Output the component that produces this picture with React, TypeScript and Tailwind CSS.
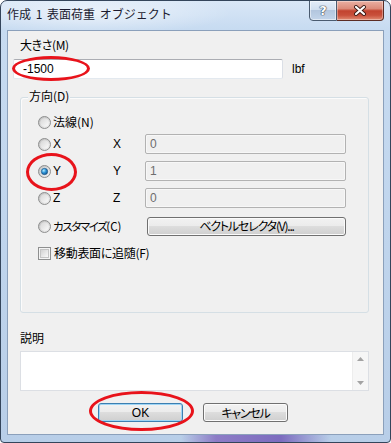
import React from "react";

const jp = "font-['Noto_Sans_CJK_JP',sans-serif] [font-feature-settings:'palt']";
const lat = "font-['Liberation_Sans','Noto_Sans_CJK_JP',sans-serif]";

function Radio({ checked }: { checked?: boolean }) {
  return (
    <svg width="13" height="13" viewBox="0 0 13 13" className="shrink-0">
      <defs>
        <linearGradient id="rgOuter" x1="0" y1="0" x2="1" y2="1">
          <stop offset="0" stopColor="#b9b9b9" />
          <stop offset="1" stopColor="#f4f4f4" />
        </linearGradient>
        <linearGradient id="rgInner" x1="0" y1="0" x2="1" y2="1">
          <stop offset="0" stopColor="#d6d6d6" />
          <stop offset="1" stopColor="#fbfbfb" />
        </linearGradient>
        <radialGradient id="rgDot" cx="0.38" cy="0.35" r="0.75">
          <stop offset="0" stopColor="#b5ecff" />
          <stop offset="0.45" stopColor="#2f95d8" />
          <stop offset="1" stopColor="#0b4a85" />
        </radialGradient>
      </defs>
      <circle cx="6.5" cy="6.5" r="6" fill="url(#rgOuter)" stroke="#8e8f8f" strokeWidth="1" />
      <circle cx="6.5" cy="6.5" r="4.3" fill="url(#rgInner)" />
      {checked && <circle cx="6.5" cy="6.5" r="3.2" fill="url(#rgDot)" stroke="#1d4f7c" strokeWidth="0.6" />}
    </svg>
  );
}

function Check() {
  return (
    <div className="w-[13px] h-[13px] shrink-0 border border-[#8e8f8f] bg-[#f4f4f4] p-[1px]">
      <div className="w-full h-full border border-[#c4c4c4] bg-[linear-gradient(135deg,#d2d2d2,#f9f9f9)]" />
    </div>
  );
}

function DisabledInput({ value }: { value: string }) {
  return (
    <div className={`w-[201px] h-[20px] rounded-[2px] border border-[#b2b2b2] bg-[#f0f0f0] shadow-[inset_0_0_0_1px_#f7f7f7] pl-[4px] flex items-center text-[12px] leading-[16px] text-[#6d6d6d] ${lat}`}>
      {value}
    </div>
  );
}

const btn =
  "h-[19px] rounded-[3px] border flex items-center justify-center bg-[linear-gradient(to_bottom,#f2f2f2_0%,#ebebeb_50%,#dddddd_50%,#cfcfcf_100%)] text-[12px] leading-[16px] text-black";

export default function App() {
  return (
    <div className="relative w-[391px] h-[443px] bg-white overflow-hidden">
      <div className="flex flex-col w-[391px] h-[443px] rounded-t-[7px] rounded-b-[4px] border border-[#34455b] bg-[linear-gradient(to_bottom,#d9e7f7_0px,#c7dbf1_28px,#b8cee8_100%)] overflow-hidden">
        {/* title bar */}
        <div className="flex h-[29px] shrink-0 bg-[radial-gradient(ellipse_140px_22px_at_90px_12px,rgba(255,255,255,0.55),rgba(255,255,255,0))]">
          <div className="pl-[6px] pt-[5px] text-[12px] leading-[16px] text-[#1b1b30] font-['Noto_Sans_CJK_JP',sans-serif] [word-spacing:2px]">
            作成 1 表面荷重 オブジェクト
          </div>
          <div className="ml-auto mr-[6px] -mt-[1px] flex h-[21px]">
            <div className="w-[28px] h-full border border-[#4a5b70] rounded-bl-[4px] bg-[linear-gradient(to_bottom,#e4edf8_0%,#d2e0f0_45%,#b3c6de_50%,#c3d5ea_100%)] shadow-[inset_0_0_0_1px_rgba(255,255,255,0.5)] flex items-center justify-center">
              <span className="font-['DejaVu_Sans',sans-serif] font-bold text-[13px] leading-[14px] text-white [text-shadow:0_0_1px_#2f3b4b,0_0_1px_#2f3b4b,0_0_1px_#2f3b4b]">?</span>
            </div>
            <div className="w-[47px] h-full border border-l-0 border-[#5b2c24] rounded-br-[4px] bg-[linear-gradient(to_bottom,#eab0a3_0%,#dc8b7a_40%,#c2432f_52%,#c9503b_75%,#e18c73_100%)] shadow-[inset_0_0_0_1px_rgba(255,255,255,0.35)] flex items-center justify-center">
              <svg width="14" height="11" viewBox="0 0 14 11">
                <path d="M3 2 L11 9 M11 2 L3 9" stroke="#3d1b16" strokeWidth="4" strokeLinecap="round" />
                <path d="M3 2 L11 9 M11 2 L3 9" stroke="#ffffff" strokeWidth="2.2" strokeLinecap="round" />
              </svg>
            </div>
          </div>
        </div>

        {/* client area */}
        <div className={`mx-[6px] flex-1 border border-[#8ba0bb] bg-[#f0f0f0] flex flex-col pt-[6px] ${jp}`}>
          <div className="pl-[12px] text-[12px] leading-[16px] text-black tracking-[-0.4px]">大きさ(M)</div>
          <div className="mt-[6px] flex items-center">
            <div className={`ml-[5px] w-[270px] h-[20px] rounded-[2px] border border-[#abadb3] border-l-[#e2e3ea] border-r-[#dbdfe6] border-b-[#e3e9ef] bg-white pl-[9px] flex items-center text-[12px] leading-[16px] text-black ${lat}`}>
              -1500
            </div>
            <span className={`ml-[9px] text-[12px] leading-[16px] text-black ${lat}`}>lbf</span>
          </div>

          {/* group box */}
          <div className="relative mt-[18px] ml-[12px] w-[349px] h-[216px] rounded-[3px] border border-[#d5dfe5] shadow-[inset_1px_1px_0_#fbfbfb] pt-[14px] flex flex-col text-[12px] leading-[16px] text-black">
            <span className="absolute left-[7px] -top-[10px] px-[1px] bg-[#f0f0f0]">方向(D)</span>

            <div className="h-[20px] flex items-center pl-[17px]">
              <div className="w-[75px] flex items-center gap-[2px]">
                <Radio />
                <span>法線(N)</span>
              </div>
            </div>

            <div className="mt-[2px] h-[20px] flex items-center pl-[17px]">
              <div className="w-[75px] flex items-center gap-[2px]">
                <Radio />
                <span className={lat}>X</span>
              </div>
              <span className={`w-[32px] ${lat}`}>X</span>
              <DisabledInput value="0" />
            </div>

            <div className="mt-[7px] h-[20px] flex items-center pl-[17px]">
              <div className="w-[75px] flex items-center gap-[2px]">
                <Radio checked />
                <span className={lat}>Y</span>
              </div>
              <span className={`w-[32px] ${lat}`}>Y</span>
              <DisabledInput value="1" />
            </div>

            <div className="mt-[7px] h-[20px] flex items-center pl-[17px]">
              <div className="w-[75px] flex items-center gap-[2px]">
                <Radio />
                <span className={lat}>Z</span>
              </div>
              <span className={`w-[32px] ${lat}`}>Z</span>
              <DisabledInput value="0" />
            </div>

            <div className="mt-[9px] h-[18px] flex items-center pl-[17px]">
              <div className="w-[109px] flex items-center gap-[2px]">
                <Radio />
                <span className="text-[11.5px]">
                  <span className="tracking-[-1.4px]">カスタマイズ</span>
                  <span>(C)</span>
                </span>
              </div>
              <div className={`${btn} h-[18px] w-[199px] border-[#707070] shadow-[inset_0_0_0_1px_#fbfbfb] text-[11px] tracking-[-1.2px]`}>
                ベクトルセレクタ(V)...
              </div>
            </div>

            <div className="mt-[8px] h-[20px] flex items-center pl-[17px]">
              <div className="flex items-center gap-[3px]">
                <Check />
                <span className="tracking-[-0.3px]">移動表面に追随(F)</span>
              </div>
            </div>
          </div>

          <div className="mt-[17px] pl-[12px] text-[12px] leading-[16px] text-black">説明</div>
          <div className="mt-[5px] ml-[12px] w-[349px] h-[40px] border border-[#dcdfe4] bg-white flex">
            <div className="flex-1" />
            <div className="w-[16px] h-full bg-[#f6f6f6] border-l border-[#ededed] flex flex-col items-center justify-between py-[5px]">
              <svg width="7" height="4" viewBox="0 0 7 4"><path d="M0 4 L3.5 0 L7 4 Z" fill="#a3a3a3" /></svg>
              <svg width="7" height="4" viewBox="0 0 7 4"><path d="M0 0 L3.5 4 L7 0 Z" fill="#a3a3a3" /></svg>
            </div>
          </div>

          <div className="mt-[12px] flex">
            <div className={`${btn} ml-[90px] w-[85px] border-[#3c7fb1] shadow-[inset_0_0_0_1px_#9fd5f5] ${lat}`}>OK</div>
            <div className={`${btn} ml-[20px] w-[85px] border-[#707070] shadow-[inset_0_0_0_1px_#fbfbfb] text-[11px] tracking-[-1.2px]`}>
              キャンセル
            </div>
          </div>
        </div>

        {/* bottom frame */}
        <div className="h-[7px] shrink-0 bg-[linear-gradient(to_right,rgba(0,0,0,0)_0px,rgba(0,0,0,0)_180px,#8d7cc6_215px,#7c6cbf_280px,rgba(0,0,0,0)_330px)]" />
      </div>

      {/* red annotation ellipses */}
      <div className="absolute left-[12px] top-[56px] w-[78px] h-[25px] rounded-[50%] border-[3px] border-[#e8131b]" />
      <div className="absolute left-[26px] top-[153px] w-[51px] h-[38px] rounded-[50%] border-[3px] border-[#e8131b]" />
      <div className="absolute left-[89px] top-[391px] w-[105px] h-[40px] rounded-[50%] border-[3px] border-[#e8131b]" />
    </div>
  );
}
